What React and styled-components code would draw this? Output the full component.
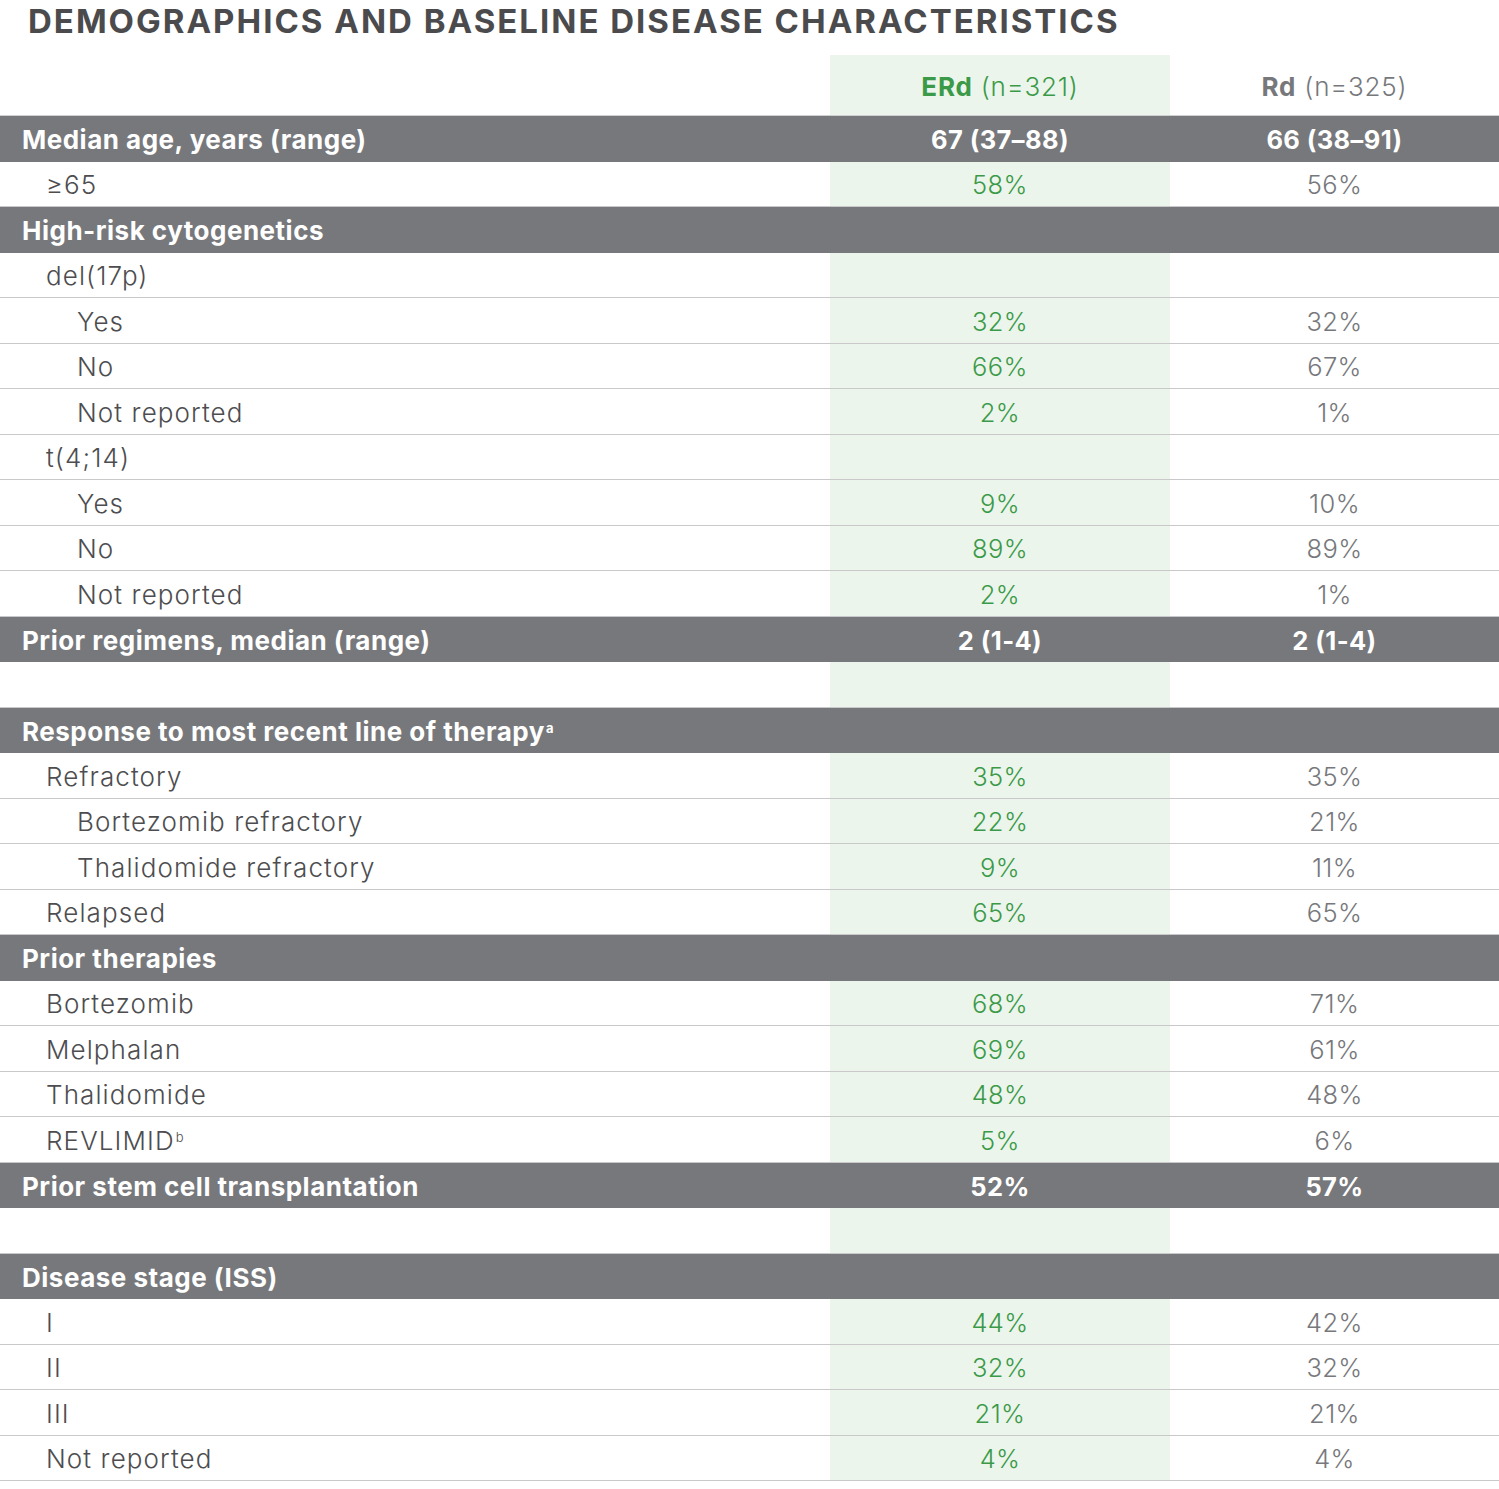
import React from 'react';
import styled, { createGlobalStyle } from 'styled-components';

const GlobalStyle = createGlobalStyle`
  html, body {
    margin: 0;
    padding: 0;
    background: #ffffff;
  }
  body {
    font-family: Inter, "Open Sans", "Liberation Sans", sans-serif;
  }
`;

const Page = styled.div`
  width: 1499px;
  height: 1489px;
  background: #fff;
  color: #4d4d4f;
`;

const Title = styled.h1`
  margin: 0;
  height: 55px;
  padding: 3px 0 0 28px;
  box-sizing: border-box;
  font-size: 33px;
  font-weight: 700;
  color: #4b4b4d;
  letter-spacing: 2px;
  line-height: 36px;
`;

const Grid = styled.div`
  display: grid;
  grid-template-columns: 830px 340px 1fr;
`;

const HeaderRow = styled(Grid)`
  height: 61px;
  box-sizing: border-box;
  border-bottom: 1.5px solid #cfcfd1;
`;

const Row = styled(Grid)`
  height: 45.5px;
  box-sizing: border-box;
  background: ${p => (p.$bar ? '#77787c' : '#fff')};
  border-bottom: ${p => (p.$bar ? 'none' : '1.5px solid #c9c9cb')};
`;

const Label = styled.div`
  display: flex;
  align-items: center;
  padding: 2px 0 0 ${p => [22, 46, 77][p.$level || 0]}px;
  font-size: 26px;
  font-weight: ${p => (p.$bar ? 700 : 300)};
  letter-spacing: ${p => (p.$bar ? '0.5px' : '1.1px')};
  color: ${p => (p.$bar ? '#fff' : '#4d4d4f')};
  white-space: nowrap;
`;

const Cell = styled.div`
  display: flex;
  align-items: center;
  justify-content: center;
  padding-top: 2px;
  font-size: 25.5px;
  letter-spacing: 0.4px;
  font-weight: ${p => (p.$bar ? 700 : 300)};
  background: ${p => (p.$green && !p.$bar ? '#ecf5ec' : 'transparent')};
  color: ${p => (p.$bar ? '#fff' : p.$green ? '#3b9a48' : '#77787c')};
`;

const HeadCell = styled(Cell)`
  padding-top: 2px;
  font-weight: 300;
  font-size: 26px;
  letter-spacing: 0.8px;
  b {
    font-weight: 700;
    margin-right: 8px;
  }
`;

const Sup = styled.sup`
  font-size: 13px;
  line-height: 0;
  position: relative;
  top: -3px;
  margin-left: 1px;
`;

const rows = [
  { bar: true, label: 'Median age, years (range)', a: '67 (37–88)', b: '66 (38–91)' },
  { level: 1, label: '≥65', a: '58%', b: '56%' },
  { bar: true, label: 'High-risk cytogenetics' },
  { level: 1, label: 'del(17p)' },
  { level: 2, label: 'Yes', a: '32%', b: '32%' },
  { level: 2, label: 'No', a: '66%', b: '67%' },
  { level: 2, label: 'Not reported', a: '2%', b: '1%' },
  { level: 1, label: 't(4;14)' },
  { level: 2, label: 'Yes', a: '9%', b: '10%' },
  { level: 2, label: 'No', a: '89%', b: '89%' },
  { level: 2, label: 'Not reported', a: '2%', b: '1%' },
  { bar: true, label: 'Prior regimens, median (range)', a: '2 (1-4)', b: '2 (1-4)' },
  { blank: true },
  { bar: true, label: 'Response to most recent line of therapy', sup: 'a' },
  { level: 1, label: 'Refractory', a: '35%', b: '35%' },
  { level: 2, label: 'Bortezomib refractory', a: '22%', b: '21%' },
  { level: 2, label: 'Thalidomide refractory', a: '9%', b: '11%' },
  { level: 1, label: 'Relapsed', a: '65%', b: '65%' },
  { bar: true, label: 'Prior therapies' },
  { level: 1, label: 'Bortezomib', a: '68%', b: '71%' },
  { level: 1, label: 'Melphalan', a: '69%', b: '61%' },
  { level: 1, label: 'Thalidomide', a: '48%', b: '48%' },
  { level: 1, label: 'REVLIMID', sup: 'b', a: '5%', b: '6%' },
  { bar: true, label: 'Prior stem cell transplantation', a: '52%', b: '57%' },
  { blank: true },
  { bar: true, label: 'Disease stage (ISS)' },
  { level: 1, label: 'I', a: '44%', b: '42%' },
  { level: 1, label: 'II', a: '32%', b: '32%' },
  { level: 1, label: 'III', a: '21%', b: '21%' },
  { level: 1, label: 'Not reported', a: '4%', b: '4%' },
];

export default function App() {
  return (
    <Page>
      <GlobalStyle />
      <Title>DEMOGRAPHICS AND BASELINE DISEASE CHARACTERISTICS</Title>
      <HeaderRow>
        <div />
        <HeadCell $green><b>ERd</b>(n=321)</HeadCell>
        <HeadCell><b>Rd</b>(n=325)</HeadCell>
      </HeaderRow>
      {rows.map((r, i) => (
        <Row key={i} $bar={r.bar}>
          <Label $bar={r.bar} $level={r.level}>
            {r.label}
            {r.sup && <Sup>{r.sup}</Sup>}
          </Label>
          <Cell $green $bar={r.bar}>{r.a}</Cell>
          <Cell $bar={r.bar}>{r.b}</Cell>
        </Row>
      ))}
    </Page>
  );
}
